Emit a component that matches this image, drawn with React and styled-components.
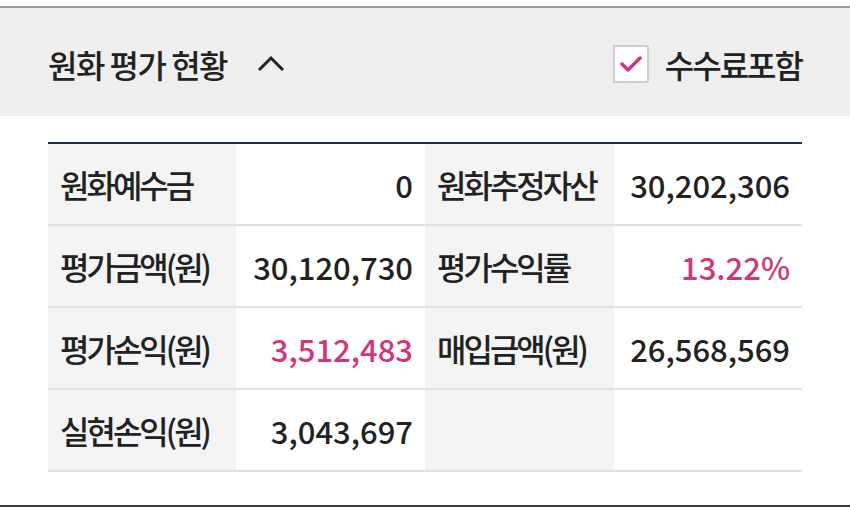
import React, { useState } from 'react';
import styled, { createGlobalStyle } from 'styled-components';

const GlobalStyle = createGlobalStyle`
  body {
    margin: 0;
    background: #ffffff;
    font-family: "Noto Sans CJK KR", "Noto Sans", sans-serif;
    color: #222222;
  }
`;

const Page = styled.div`
  padding-top: 6px;
`;

const Panel = styled.section`
  border-top: 2px solid #9c9c9c;
  border-bottom: 2px solid #3a3a3a;
  padding-bottom: 33px;
`;

const Header = styled.header`
  height: 108px;
  background: #efefef;
  padding: 4px 48px 0 48px;
  box-sizing: border-box;
  display: flex;
  align-items: center;
  justify-content: space-between;
`;

const TitleGroup = styled.button`
  display: flex;
  align-items: center;
  gap: 30px;
  background: none;
  border: 0;
  padding: 0;
  cursor: pointer;
  color: #222222;
  font-family: inherit;
`;

const Title = styled.h2`
  margin: 0;
  font-size: 32px;
  font-weight: 500;
  letter-spacing: -1.5px;
`;

const FeeToggle = styled.label`
  display: flex;
  align-items: center;
  gap: 16px;
  font-size: 32px;
  font-weight: 500;
  letter-spacing: -2px;
  cursor: pointer;
`;

const Box = styled.span`
  width: 32px;
  height: 34px;
  border: 2px solid #cfcfcf;
  background: #ffffff;
  display: flex;
  align-items: center;
  justify-content: center;
`;

const Body = styled.div`
  padding: 26px 48px 0 48px;
`;

const Grid = styled.div`
  display: grid;
  grid-template-columns: 188px 189px 189px 188px;
  border-top: 2px solid #1f2e45;
`;

const Cell = styled.div`
  height: 80px;
  border-bottom: 2px solid #e2e2e2;
  display: flex;
  align-items: center;
  justify-content: ${(p) => (p.$label ? 'flex-start' : 'flex-end')};
  padding: 0 12px;
  background: ${(p) => (p.$label ? '#f4f4f4' : '#ffffff')};
  font-size: ${(p) => (p.$label ? '32px' : '31px')};
  font-weight: 500;
  letter-spacing: ${(p) => (p.$label ? '-3px' : '0')};
  color: ${(p) => (p.$accent ? '#d2357a' : '#222222')};
  white-space: nowrap;
`;

const rows = [
  ['원화예수금', '0', '원화추정자산', '30,202,306'],
  ['평가금액(원)', '30,120,730', '평가수익률', '13.22%', 'right'],
  ['평가손익(원)', '3,512,483', '매입금액(원)', '26,568,569', 'left'],
  ['실현손익(원)', '3,043,697', '', ''],
];

const Chevron = () => (
  <svg width="28" height="18" viewBox="0 0 28 18">
    <path d="M2 15 L14 3 L26 15" fill="none" stroke="#222" strokeWidth="3" />
  </svg>
);

const Check = () => (
  <svg width="22" height="18" viewBox="0 0 22 18">
    <path d="M2 9 L8 15 L20 3" fill="none" stroke="#d2357a" strokeWidth="3.5" strokeLinecap="round" strokeLinejoin="round" />
  </svg>
);

const App = () => {
  const [open, setOpen] = useState(true);
  const [withFee, setWithFee] = useState(true);

  return (
    <Page>
      <GlobalStyle />
      <Panel>
        <Header>
          <TitleGroup onClick={() => setOpen(!open)}>
            <Title>원화 평가 현황</Title>
            <Chevron />
          </TitleGroup>
          <FeeToggle onClick={() => setWithFee(!withFee)}>
            <Box>{withFee && <Check />}</Box>
            수수료포함
          </FeeToggle>
        </Header>
        <Body>
          <Grid>
            {rows.map(([l1, v1, l2, v2, accent]) => (
              <React.Fragment key={l1}>
                <Cell $label>{l1}</Cell>
                <Cell $accent={accent === 'left'}>{v1}</Cell>
                <Cell $label>{l2}</Cell>
                <Cell $accent={accent === 'right'}>{v2}</Cell>
              </React.Fragment>
            ))}
          </Grid>
        </Body>
      </Panel>
    </Page>
  );
};

export default App;
